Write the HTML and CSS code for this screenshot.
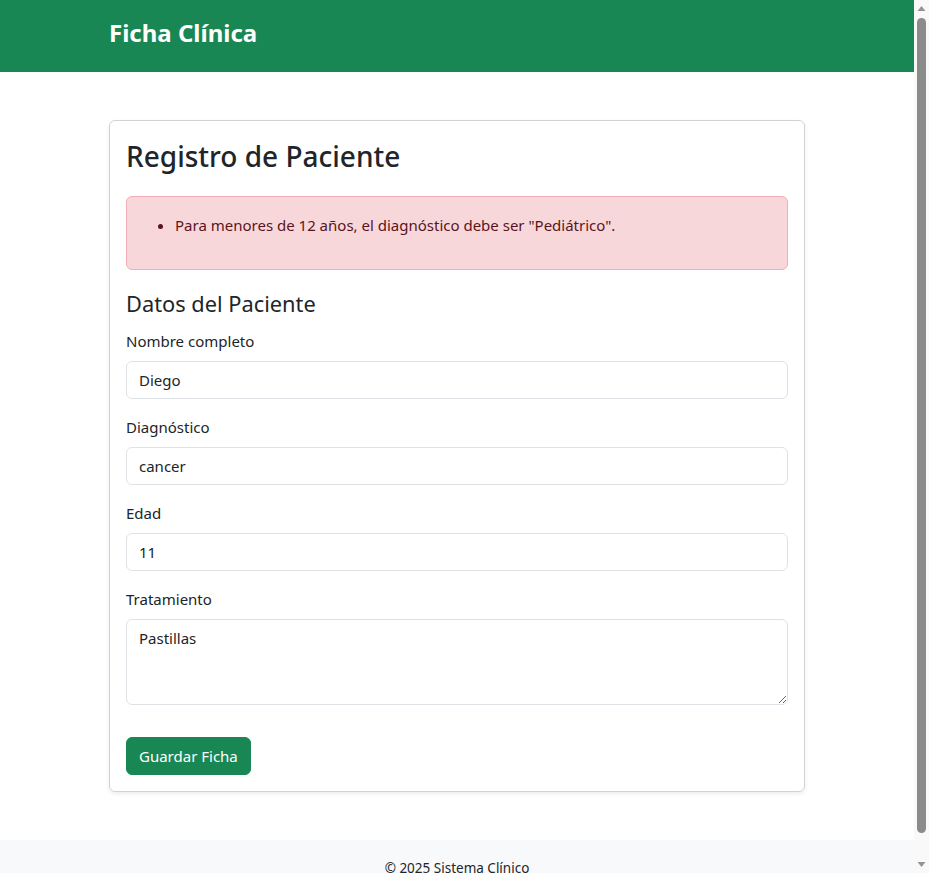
FILE: index.html
```html
<!DOCTYPE html>
<html lang="es">
<head>
<meta charset="utf-8">
<title>Ficha Clínica</title>
<link rel="stylesheet" href="styles.css">
</head>
<body>
<div class="page">
  <nav class="navbar">
    <div class="container">
      <span class="brand">Ficha Clínica</span>
    </div>
  </nav>
  <main class="container main">
    <div class="card">
      <h2 class="title">Registro de Paciente</h2>
      <div class="alert">
        <ul>
          <li>Para menores de 12 años, el diagnóstico debe ser "Pediátrico".</li>
        </ul>
      </div>
      <form class="form">
        <h4 class="section">Datos del Paciente</h4>
        <div class="field">
          <label>Nombre completo</label>
          <input class="control" type="text" value="Diego">
        </div>
        <div class="field">
          <label>Diagnóstico</label>
          <input class="control" type="text" value="cancer">
        </div>
        <div class="field">
          <label>Edad</label>
          <input class="control" type="text" value="11">
        </div>
        <div class="field field-last">
          <label>Tratamiento</label>
          <textarea class="control area" rows="3">Pastillas</textarea>
        </div>
        <div><button type="button" class="btn">Guardar Ficha</button></div>
      </form>
    </div>
  </main>
  <footer class="footer">© 2025 Sistema Clínico</footer>
</div>
<div class="scrollbar" aria-hidden="true">
  <svg class="arrow" width="15" height="17" viewBox="0 0 15 17"><polygon points="3.5,11 7.5,6 11.5,11" fill="#939393"/></svg>
  <div class="track"><div class="thumb"></div></div>
  <svg class="arrow" width="15" height="17" viewBox="0 0 15 17"><polygon points="3.5,6 7.5,11 11.5,6" fill="#939393"/></svg>
</div>
</body>
</html>
```
FILE: styles.css
```css
html, body {
  margin: 0;
  height: 100%;
  overflow: hidden;
}

body {
  font-family: "Noto Sans", "Open Sans", sans-serif;
  font-size: 15px;
  line-height: 24px;
  color: #212529;
  background: #fff;
}

.page {
  width: 914px;
}

.scrollbar {
  position: fixed;
  top: 0;
  right: 0;
  width: 15px;
  height: 100vh;
  background: #f9f9f9;
  display: flex;
  flex-direction: column;
}
.arrow {
  display: block;
  flex: none;
}
.track {
  flex: 1;
  padding: 1px 3px 0 3px;
}
.thumb {
  height: 815px;
  background: #8b8b8b;
  border-radius: 5px;
}

.container {
  max-width: 720px;
  margin: 0 auto;
  padding: 0 12px;
  box-sizing: border-box;
}

.navbar {
  background: #198754;
  height: 72px;
  display: flex;
  align-items: center;
}
.navbar .container {
  width: 100%;
  padding-bottom: 6px;
}
.brand {
  color: #fff;
  font-size: 24px;
  font-weight: 700;
  line-height: 36px;
}

.main {
  padding-top: 48px;
  padding-bottom: 48px;
}

.card {
  border: 1px solid rgba(0, 0, 0, 0.175);
  border-radius: 6px;
  box-shadow: 0 2px 4px rgba(0, 0, 0, 0.075);
  padding: 16px;
}

.title {
  margin: 0 0 21px;
  padding-top: 2px;
  font-size: 28px;
  font-weight: 500;
  line-height: 35.5px;
}

.alert {
  background: #f8d7da;
  border: 1px solid #f1aeb5;
  border-radius: 6px;
  color: #58151c;
  padding: 16px;
  margin-bottom: 16px;
}
.alert ul {
  margin: 0 0 16px;
  padding-left: 32px;
}

.section {
  margin: 0 0 11px;
  padding-top: 4px;
  font-size: 21.8px;
  font-weight: 400;
  line-height: 28px;
}

.field {
  display: flex;
  flex-direction: column;
  margin-bottom: 16px;
}
.field-last {
  margin-bottom: 32px;
}
.field label {
  margin-bottom: 8px;
}
.control {
  font-family: inherit;
  font-size: 15px;
  line-height: 24px;
  color: #212529;
  background: #fff;
  border: 1px solid #dee2e6;
  border-radius: 6px;
  padding: 6px 12px;
  box-sizing: border-box;
  width: 100%;
  height: 38px;
  margin: 0;
}
.area {
  height: 86px;
  resize: vertical;
}

.btn {
  font-family: inherit;
  font-size: 15px;
  line-height: 24px;
  color: #fff;
  background: #198754;
  border: 1px solid #198754;
  border-radius: 6px;
  padding: 6px 12px;
  cursor: pointer;
}

.footer {
  background: #f8f9fa;
  text-align: center;
  padding: 16px 0;
  font-size: 13.5px;
  line-height: 24px;
}
```
